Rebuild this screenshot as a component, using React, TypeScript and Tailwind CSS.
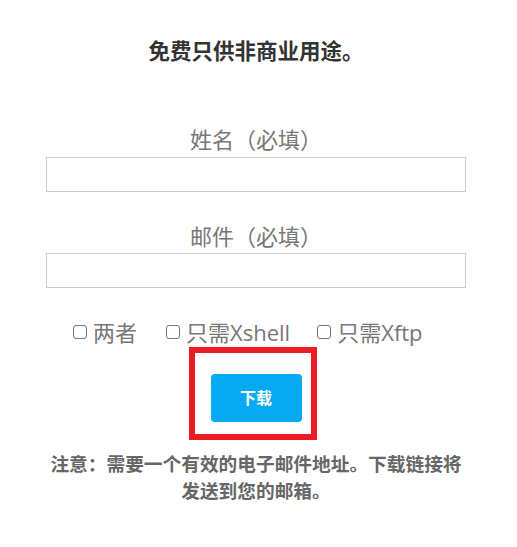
import React from "react";

const font = { fontFamily: '"Open Sans", "Noto Sans CJK SC", sans-serif' };

const Check = ({ label, className }: { label: string; className?: string }) => (
  <label className={`flex items-center ${className ?? ""}`}>
    <span className="inline-block w-[14px] h-[14px] border border-[#777] rounded-[3px] bg-white mr-[6px]" />
    <span>{label}</span>
  </label>
);

const App = () => {
  return (
    <div className="w-[517px] h-[547px] bg-white overflow-hidden" style={font}>
      <div className="w-[512px] px-[46px] flex flex-col items-center">
        <h1 className="mt-[36px] text-[21.5px] leading-[30px] font-bold text-[#333]">
          免费只供非商业用途。
        </h1>

        <label className="mt-[58px] text-[22px] leading-[30px] text-[#777]">姓名（必填）</label>
        <input className="mt-[3px] w-[420px] h-[35px] border border-[#ccc] outline-none px-2" />

        <label className="mt-[29px] text-[22px] leading-[30px] text-[#777]">邮件（必填）</label>
        <input className="mt-[2px] w-[420px] h-[35px] border border-[#ccc] outline-none px-2" />

        <div className="mt-[29px] self-start flex items-center text-[22px] leading-[30px] text-[#777] ml-[27px]">
          <Check label="两者" />
          <Check label="只需Xshell" className="ml-[29px]" />
          <Check label="只需Xftp" className="ml-[27px]" />
        </div>

        <div className="relative mt-[27px]">
          <button className="w-[91px] h-[48px] rounded-[4px] bg-[#06aaf3] text-white text-[16px] font-bold">
            下载
          </button>
          <div className="absolute left-[-22px] top-[-27px] w-[128px] h-[93px] border-[6px] border-[#ec1c24] pointer-events-none" />
        </div>

        <p className="mt-[28px] text-[18.7px] leading-[27px] font-bold text-[#666] text-center w-[440px]">
          注意：需要一个有效的电子邮件地址。下载链接将
          <br />
          发送到您的邮箱。
        </p>
      </div>
    </div>
  );
};

export default App;
